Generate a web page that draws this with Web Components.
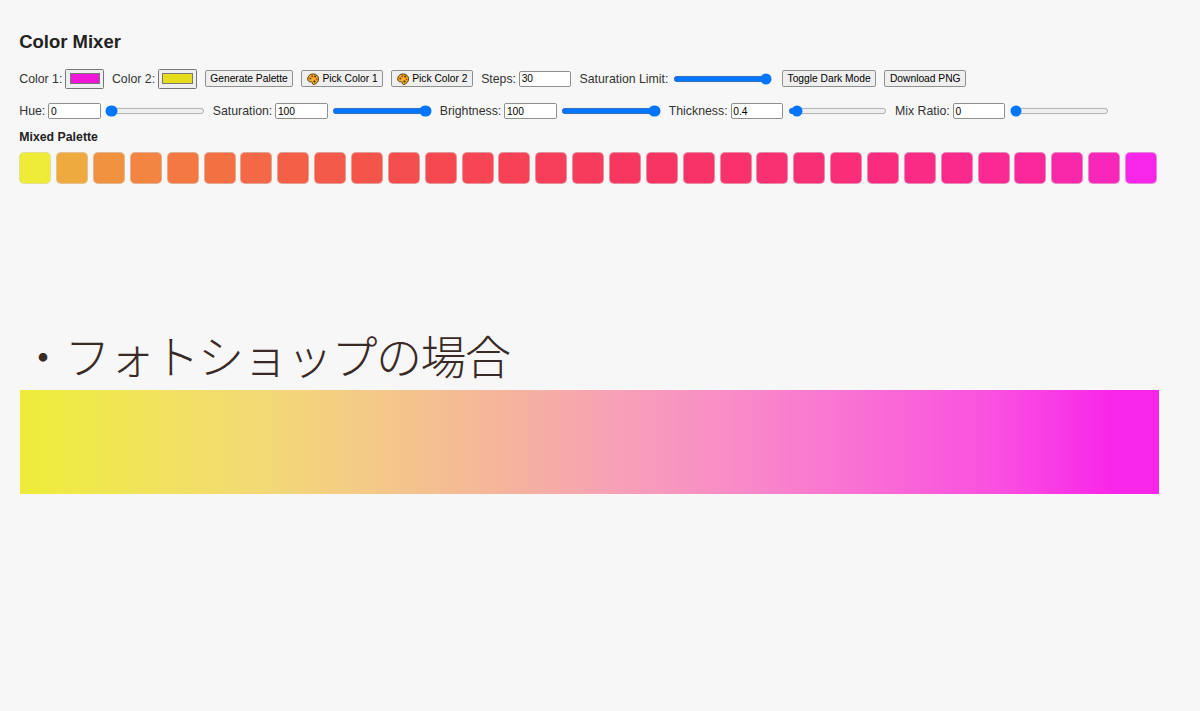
<!DOCTYPE html>
<html lang="en">
<head>
<meta charset="utf-8">
<title>Color Mixer</title>
<style>
  body { margin: 0; background: #f7f7f7; font-family: "Liberation Sans", Arial, sans-serif; color: #222; }
</style>
</head>
<body>
<color-mixer></color-mixer>
<gradient-sample></gradient-sample>

<script>
const CONTROL_CSS = `
  input[type=number] {
    box-sizing: border-box;
    width: 68px;
    height: 21px;
    margin: 0;
    padding: 1px 2px;
    font: 13.33px "Liberation Sans", Arial, sans-serif;
    color: #000;
    background: #fff;
    border: 1.5px solid #8f8f8f;
    border-radius: 2.5px;
  }
  input[type=range] { margin: 2px; width: 129px; height: 16px; }
  input[type=color] { margin: 0; width: 50px; height: 27px; }
`;

// label in front of whatever the user slots in
customElements.define('mix-field', class extends HTMLElement {
  constructor() {
    super();
    this.attachShadow({ mode: 'open' }).innerHTML = `
      <style>
        :host { display: flex; align-items: center; gap: 4px; font-size: 16px; color: #333; }
      </style>
      <span>${this.getAttribute('label')}</span>
      <slot></slot>
    `;
  }
});

customElements.define('color-well', class extends HTMLElement {
  constructor() {
    super();
    this.attachShadow({ mode: 'open' }).innerHTML = `
      <style>
        :host { display: block; line-height: 0; }
        ${CONTROL_CSS}
      </style>
      <input type="color" value="${this.getAttribute('value')}">
    `;
  }
});

customElements.define('number-box', class extends HTMLElement {
  constructor() {
    super();
    const width = this.getAttribute('width');
    this.attachShadow({ mode: 'open' }).innerHTML = `
      <style>
        :host { display: block; line-height: 0; }
        ${CONTROL_CSS}
        ${width ? `input[type=number] { width: ${width}px; }` : ''}
      </style>
      <input type="number" value="${this.getAttribute('value')}">
    `;
  }
});

customElements.define('range-slider', class extends HTMLElement {
  constructor() {
    super();
    const min = this.getAttribute('min') || 0;
    const max = this.getAttribute('max') || 100;
    const step = this.getAttribute('step') || 1;
    this.attachShadow({ mode: 'open' }).innerHTML = `
      <style>
        :host { display: block; line-height: 0; }
        ${CONTROL_CSS}
      </style>
      <input type="range" min="${min}" max="${max}" step="${step}" value="${this.getAttribute('value')}">
    `;
  }
});

customElements.define('mix-button', class extends HTMLElement {
  constructor() {
    super();
    const icon = this.hasAttribute('icon') ? `
      <svg viewBox="0 0 16 16" width="16" height="16" aria-hidden="true">
        <path d="M8 1.2C3.9 1.2.9 4 .9 7.6c0 2.6 1.9 4.2 3.7 3.9 1.3-.2 2.2.2 2.3 1.5.1 1.4 1 2.2 2.2 1.9 3.100-.8 5.900-3.700 5.900-7C15.100 4 12 1.200 8 1.200z" fill="#f5b324" stroke="#4a3208" stroke-width="1.200"/>
        <circle cx="4.300" cy="7.200" r="1.300" fill="#7a3a10"/>
        <circle cx="6.800" cy="4.300" r="1.300" fill="#b5341c"/>
        <circle cx="10.600" cy="4.600" r="1.300" fill="#3a2a12"/>
        <circle cx="12.400" cy="8" r="1.300" fill="#c8501a"/>
        <circle cx="9.700" cy="11" r="1.400" fill="#3a2a12"/>
      </svg>` : '';
    this.attachShadow({ mode: 'open' }).innerHTML = `
      <style>
        :host { display: block; line-height: 0; }
        button {
          display: flex;
          align-items: center;
          gap: 4px;
          height: 22px;
          margin: 0;
          padding: 1px 6px;
          font: 13.33px "Liberation Sans", Arial, sans-serif;
          color: #000;
          white-space: nowrap;
          background: #efefef;
          border: 1.5px solid #8f8f8f;
          border-radius: 2.5px;
        }
      </style>
      <button type="button">${icon}<slot></slot></button>
    `;
  }
});

customElements.define('swatch-strip', class extends HTMLElement {
  constructor() {
    super();
    this.attachShadow({ mode: 'open' }).innerHTML = `
      <style>
        :host { display: flex; gap: 6.35px; }
        div {
          box-sizing: border-box;
          flex: none;
          width: 41.550px;
          height: 41.550px;
          border-radius: 6.500px;
          border: 1px solid rgba(215, 215, 215, .55);
        }
      </style>
    `;
    // colours read off the reference, in between them it is just linear
    const stops = [
      [0, 238, 236, 56], [1, 238, 170, 62], [2, 240, 146, 64], [4, 243, 120, 66],
      [7, 244, 96, 70], [11, 245, 72, 80], [17, 248, 52, 100], [23, 250, 44, 125],
      [27, 250, 40, 155], [29, 248, 38, 185], [30, 248, 38, 232]
    ];
    for (let i = 0; i <= 30; i++) {
      const to = stops.findIndex(stop => stop[0] >= i);
      const b = stops[to];
      const a = stops[Math.max(to - 1, 0)];
      const t = b[0] === a[0] ? 0 : (i - a[0]) / (b[0] - a[0]);
      const mix = n => Math.round(a[n] + (b[n] - a[n]) * t);
      const swatch = document.createElement('div');
      swatch.style.background = `rgb(${mix(1)}, ${mix(2)}, ${mix(3)})`;
      this.shadowRoot.append(swatch);
    }
  }
});

customElements.define('color-mixer', class extends HTMLElement {
  constructor() {
    super();
    this.attachShadow({ mode: 'open' }).innerHTML = `
      <style>
        /* the whole tool is shown at 77%, the controls keep their native look */
        :host { display: block; zoom: .77; padding: 40px 25px 0; height: 392px; box-sizing: border-box; }
        h2 { margin: 0 0 21px; font-size: 24px; line-height: 28px; color: #222; }
        h3 { margin: 0 0 9px; font-size: 16px; line-height: 18px; color: #222; }
        .row { display: flex; align-items: center; gap: 10.400px; margin-bottom: 18px; white-space: nowrap; }
        .row--first { height: 27px; }
        .row--second { height: 21px; margin-bottom: 15px; gap: 8.500px; }
      </style>
      <h2>Color Mixer</h2>
      <div class="row row--first">
        <mix-field label="Color 1:"><color-well value="#f016d8"></color-well></mix-field>
        <mix-field label="Color 2:"><color-well value="#e6dc1e"></color-well></mix-field>
        <mix-button>Generate Palette</mix-button>
        <mix-button icon>Pick Color 1</mix-button>
        <mix-button icon>Pick Color 2</mix-button>
        <mix-field label="Steps:"><number-box value="30"></number-box></mix-field>
        <mix-field label="Saturation Limit:"><range-slider value="100"></range-slider></mix-field>
        <mix-button>Toggle Dark Mode</mix-button>
        <mix-button>Download PNG</mix-button>
      </div>
      <div class="row row--second">
        <mix-field label="Hue:"><number-box value="0"></number-box><range-slider value="0" max="360"></range-slider></mix-field>
        <mix-field label="Saturation:"><number-box value="100"></number-box><range-slider value="100"></range-slider></mix-field>
        <mix-field label="Brightness:"><number-box value="100"></number-box><range-slider value="100"></range-slider></mix-field>
        <mix-field label="Thickness:"><number-box value="0.4"></number-box><range-slider value="0.4" min="0" max="10" step="0.1"></range-slider></mix-field>
        <mix-field label="Mix Ratio:"><number-box value="0"></number-box><range-slider value="0"></range-slider></mix-field>
      </div>
      <h3>Mixed Palette</h3>
      <swatch-strip></swatch-strip>
    `;
  }
});

customElements.define('gradient-sample', class extends HTMLElement {
  constructor() {
    super();
    this.attachShadow({ mode: 'open' }).innerHTML = `
      <style>
        :host { display: block; padding: 22px 41px 0 20px; }
        h1 {
          margin: 0 0 6px;
          font: 300 46px/60px "Noto Sans CJK JP", "Noto Sans", sans-serif;
          letter-spacing: -1.500px;
          color: #3a2a25;
          white-space: nowrap;
        }
        div {
          height: 104px;
          background: linear-gradient(90deg,
            #eeec38 0%, #efe94a 5%, #f1e25f 12%, #f3d877 22%, #f4c78a 32%,
            #f5b39d 43%, #f7a1b6 52%, #f88dc6 62%, #f96fd4 74%, #f94fe0 86%, #f826e8 96%, #f826e8 100%);
        }
      </style>
      <h1>・フォトショップの場合</h1>
      <div></div>
    `;
  }
});
</script>
</body>
</html>
